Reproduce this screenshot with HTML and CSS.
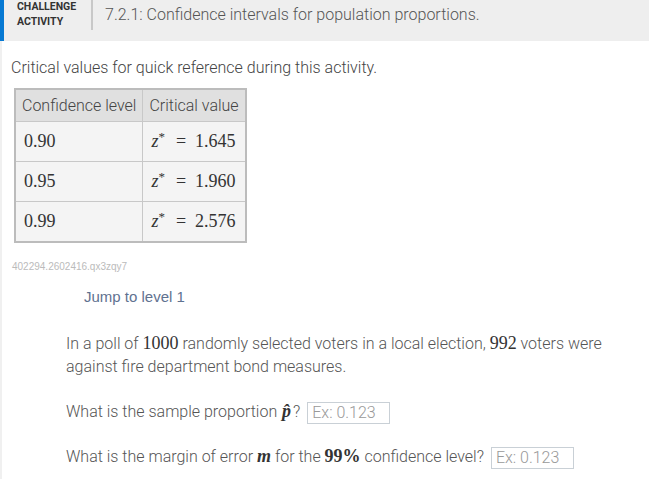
FILE: index.html
```html
<!DOCTYPE html>
<html>
<head>
<meta charset="utf-8">
<link rel="stylesheet" href="styles.css">
</head>
<body>
<div class="page">
  <div class="header">
    <div class="label">CHALLENGE<br>ACTIVITY</div>
    <div class="title">7.2.1: Confidence intervals for population proportions.</div>
  </div>
  <div class="content">
    <p class="intro">Critical values for quick reference during this activity.</p>
    <table class="crit">
      <thead>
        <tr><th>Confidence level</th><th>Critical value</th></tr>
      </thead>
      <tbody>
        <tr><td class="num">0.90</td><td class="num"><i>z</i><sup>*</sup><span class="eq">=</span>1.645</td></tr>
        <tr><td class="num">0.95</td><td class="num"><i>z</i><sup>*</sup><span class="eq">=</span>1.960</td></tr>
        <tr><td class="num">0.99</td><td class="num"><i>z</i><sup>*</sup><span class="eq">=</span>2.576</td></tr>
      </tbody>
    </table>
    <div class="ident">402294.2602416.qx3zqy7</div>
    <div class="jump">Jump to level 1</div>
    <div class="question">
      <p class="stem">In a poll of <span class="m">1000</span> randomly selected voters in a local election, <span class="m">992</span> voters were against fire department bond measures.</p>
      <p class="ask">What is the sample proportion <span class="m bi phat">p&#770;</span>? <span class="box">Ex: 0.123</span></p>
      <p class="ask second">What is the margin of error <span class="m bi">m</span> for the <span class="m b">99%</span> confidence level? <span class="box">Ex: 0.123</span></p>
    </div>
  </div>
</div>
</body>
</html>
```
FILE: styles.css
```css
html, body { margin: 0; padding: 0; background: #fff; }
body { font-family: Roboto, "Liberation Sans", sans-serif; font-weight: 300; color: #555; }
.page { border-left: 2px solid #f0f0f0; min-height: 479px; }
.header {
  display: flex;
  align-items: flex-start;
  background: #eeeeee;
  border-left: 4px solid #0679d3;
  margin-left: -2px;
  height: 41px;
}
.label {
  font-size: 10.5px;
  font-weight: bold;
  color: #333;
  line-height: 15px;
  padding: 0 12px 0 13px;
  margin-top: -1px;
  height: 31px;
  border-right: 2px solid #c8c8c8;
  width: 62px;
}
.title {
  font-size: 16px;
  color: #555;
  padding-left: 12px;
  line-height: 30px;
}
.content { padding-left: 9px; }
.intro { margin: 17px 0 11px; font-size: 16px; color: #444; }
.crit {
  border-collapse: collapse;
  border: 2px solid #bcbcbc;
  margin-left: 3px;
}
.crit th {
  background: #e0e0e0;
  font-weight: 300;
  font-size: 16px;
  color: #444;
  text-align: left;
  height: 31px;
  padding: 0 6px;
  border: 1px solid #c8c8c8;
}
.crit td {
  background: #f4f4f4;
  border: 1px solid #c8c8c8;
  height: 39px;
  padding: 0 8px;
}
.num { font-family: "Liberation Serif", serif; font-size: 18px; font-weight: normal; color: #333; }
.crit i { font-style: italic; }
.crit sup { font-size: 13px; vertical-align: 6px; line-height: 0; }
.eq { padding: 0 9px 0 11px; }
.ident { font-family: "Liberation Sans", sans-serif; font-weight: normal; font-size: 10px; color: #bbb; margin: 18px 0 0 1px; }
.jump { font-family: "Liberation Sans", sans-serif; font-weight: normal; font-size: 15px; color: #5f7290; margin: 16px 0 0 73px; }
.question { margin-left: 55px; margin-top: 27px; }
.stem { margin: 0; font-size: 16px; line-height: 23px; color: #555; width: 560px; }
.m { font-family: "Liberation Serif", serif; font-size: 18px; font-weight: normal; color: #333; line-height: 1; }
.b { font-weight: bold; }
.bi { font-weight: bold; font-style: italic; }
.phat { padding: 0 2px 0 1px; }
.ask { margin: 0; font-size: 16px; color: #555; line-height: 23px; margin-top: 22px; }
.ask.second { margin-top: 21px; }
.box {
  display: inline-block;
  border: 1px solid #c9d0d6;
  color: #999;
  width: 77px;
  height: 20px;
  line-height: 20px;
  padding-left: 4px;
  margin-left: 3px;
  vertical-align: middle;
}
```
